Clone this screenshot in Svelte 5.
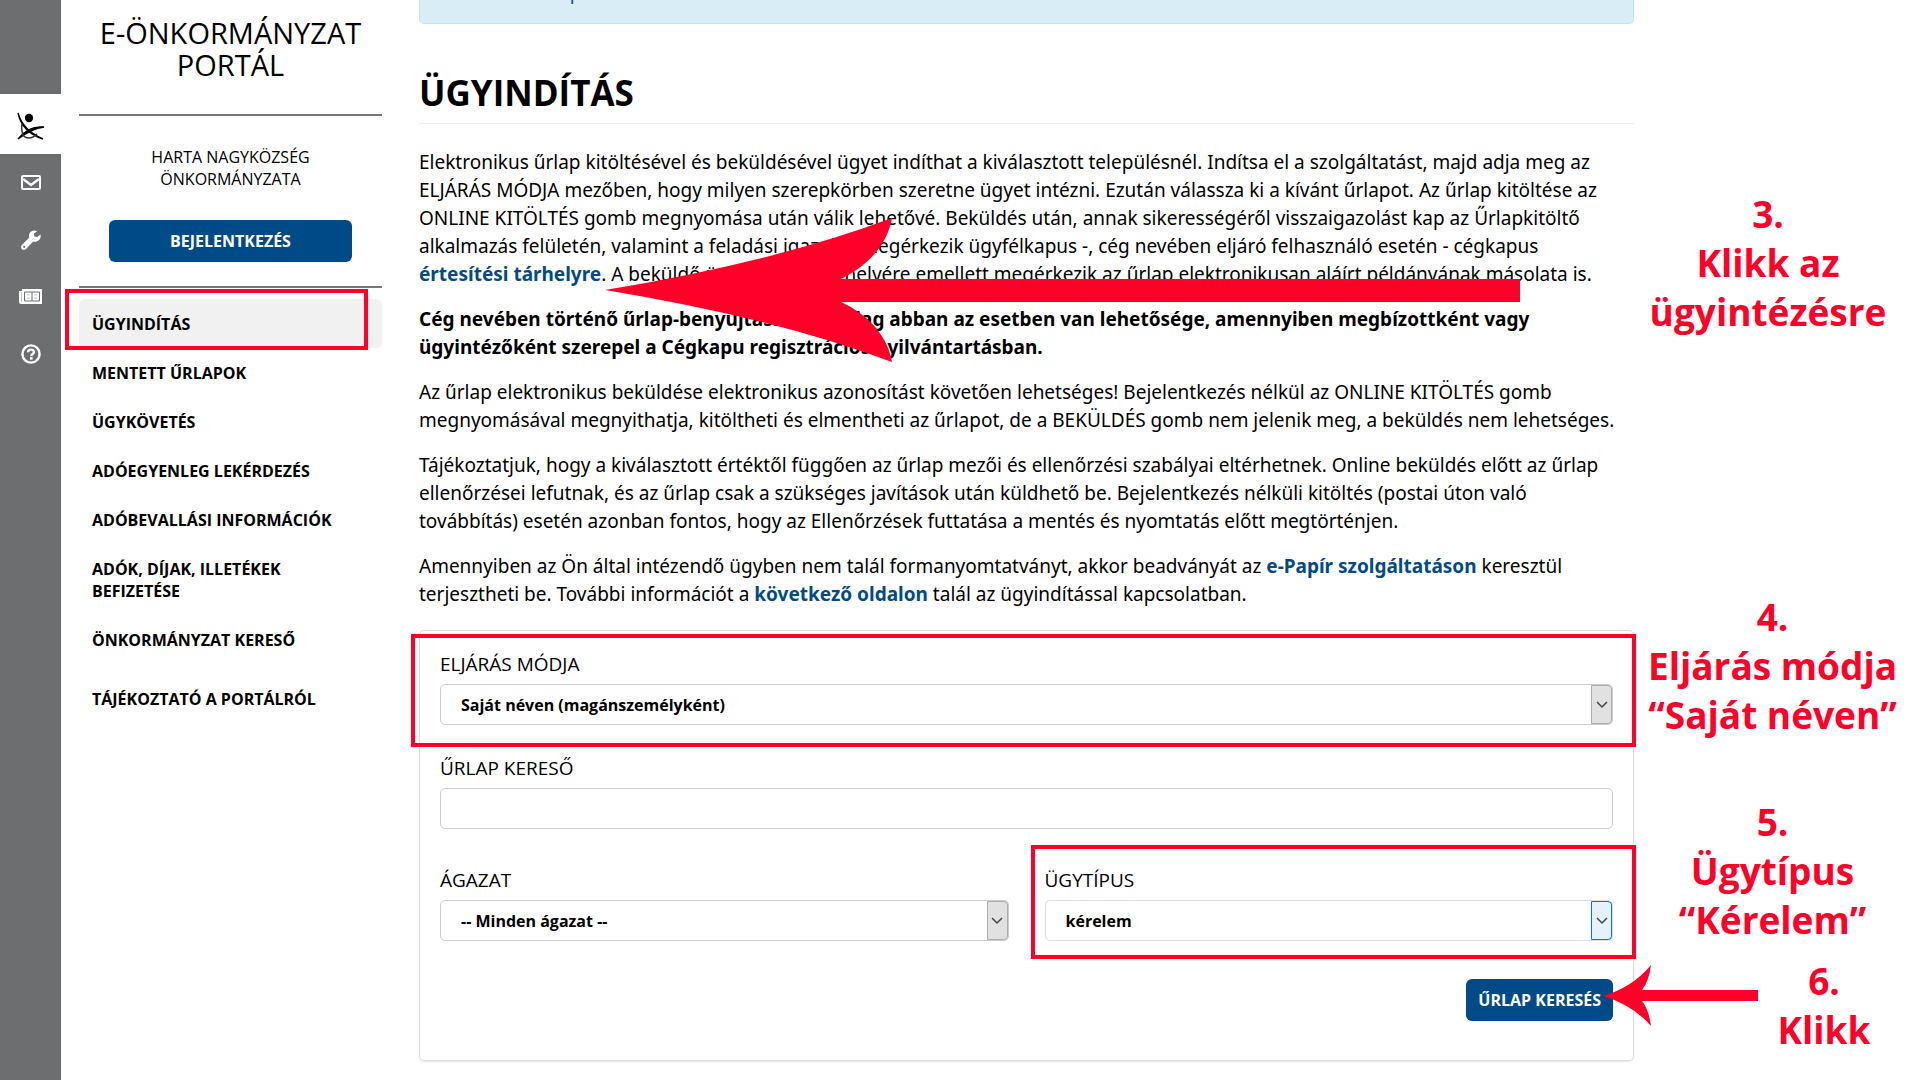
<script>
    const menu = [
        { label: 'ÜGYINDÍTÁS', active: true },
        { label: 'MENTETT ŰRLAPOK' },
        { label: 'ÜGYKÖVETÉS' },
        { label: 'ADÓEGYENLEG LEKÉRDEZÉS' },
        { label: 'ADÓBEVALLÁSI INFORMÁCIÓK' },
        { label: 'ADÓK, DÍJAK, ILLETÉKEK BEFIZETÉSE' },
        { label: 'ÖNKORMÁNYZAT KERESŐ' },
        { label: 'TÁJÉKOZTATÓ A PORTÁLRÓL', spaced: true }
    ];

    let search = $state('');
</script>

<div class="page">
    <nav class="rail" aria-label="Gyorsmenü">
        <a href="#home" class="logo" aria-label="Kezdőlap">
            <svg width="28" height="28" viewBox="0 0 28 28">
                <circle cx="12" cy="6" r="4.2" fill="#000" />
                <path d="M1 1C4 12 12 21 26 27C14 23 4 15 1 1Z" fill="#000" stroke="#000" stroke-width="1.4" />
                <path d="M1 27C8 18 16 14 27 15C18 16 10 20 1 27Z" fill="#000" stroke="#000" stroke-width="1.4" />
                <path d="M5 12C4 21 6 26 12 26C16 26 18 24 20 22" fill="none" stroke="#333" stroke-width="1.5" />
            </svg>
        </a>
        <a href="#mail" aria-label="Üzenetek">
            <svg width="20" height="15" viewBox="0 0 20 15">
                <rect x="1" y="1" width="18" height="13" rx="1" fill="none" stroke="#fff" stroke-width="2" />
                <path d="M2 4L10 10L18 4" fill="none" stroke="#fff" stroke-width="2.4" />
            </svg>
        </a>
        <a href="#tools" aria-label="Beállítások">
            <svg width="20" height="20" viewBox="0 0 20 20">
                <path d="M19.6 4.6L16.2 7L13.4 6.4L12.9 3.6L16.2 1.2C13.5 -.4 10 .6 8.6 3.2C7.8 4.7 7.8 6.2 8.3 7.6L.9 15C-.2 16.1 -.2 17.7 .8 18.9C2 20.1 3.8 20.2 5 19L12.2 11.6C16.5 12.8 20.4 9.2 19.6 4.6ZM3.2 17.9A1.1 1.1 0 1 1 3.2 15.7A1.1 1.1 0 0 1 3.2 17.9Z" fill="#fff" />
            </svg>
        </a>
        <a href="#news" aria-label="Hírek">
            <svg width="23" height="15" viewBox="0 0 23 15">
                <path d="M3 0H23V15H2Q0 15 0 13V2H3Z" fill="#fff" />
                <path d="M2.5 3V13" fill="none" stroke="#c9c9ca" stroke-width="1" />
                <path d="M5.5 3H20.5V12H5.5ZM13 3V12" fill="none" stroke="#6d6e70" stroke-width="1" />
                <path d="M8 6H11M15 6H18M8 9H11M15 9H18" stroke="#c9c9ca" stroke-width="1" />
            </svg>
        </a>
        <a href="#help" aria-label="Súgó">
            <svg width="20" height="20" viewBox="0 0 20 20">
                <circle cx="10" cy="10" r="8.6" fill="none" stroke="#fff" stroke-width="2.4" />
                <path d="M7 8.2C7.2 4.8 13 4.9 13 8C13 10 10.3 10 10.3 12.2" fill="none" stroke="#fff" stroke-width="2.4" />
                <rect x="9" y="13.2" width="2.6" height="2.4" fill="#fff" />
            </svg>
        </a>
    </nav>

    <aside class="sidebar">
        <h2>E-ÖNKORMÁNYZAT PORTÁL</h2>
        <div class="account">
            <p>HARTA NAGYKÖZSÉG ÖNKORMÁNYZATA</p>
            <button type="button" class="login">BEJELENTKEZÉS</button>
        </div>
        <ul>
            {#each menu as item}
                <li class:active={item.active} class:spaced={item.spaced}>
                    <a href="#menu">{item.label}</a>
                </li>
            {/each}
        </ul>
    </aside>

    <main>
        <div class="alert"><a href="#asp">ASP Központ</a></div>
        <h1>ÜGYINDÍTÁS</h1>

        <div class="intro">
            <p>
                Elektronikus űrlap kitöltésével és beküldésével ügyet indíthat a kiválasztott településnél. Indítsa el a szolgáltatást, majd adja meg az<br />
                ELJÁRÁS MÓDJA mezőben, hogy milyen szerepkörben szeretne ügyet intézni. Ezután válassza ki a kívánt űrlapot. Az űrlap kitöltése az<br />
                ONLINE KITÖLTÉS gomb megnyomása után válik lehetővé. Beküldés után, annak sikerességéről visszaigazolást kap az Űrlapkitöltő<br />
                alkalmazás felületén, valamint a feladási igazolás megérkezik ügyfélkapus -, cég nevében eljáró felhasználó esetén - cégkapus<br />
                <a href="#tarhely">értesítési tárhelyre</a>. A beküldő ügyfélkapus tárhelyére emellett megérkezik az űrlap elektronikusan aláírt példányának másolata is.
            </p>
            <p>
                <strong>Cég nevében történő űrlap-benyújtásra kizárólag abban az esetben van lehetősége, amennyiben megbízottként vagy<br />
                ügyintézőként szerepel a Cégkapu regisztrációs nyilvántartásban.</strong>
            </p>
            <p>
                Az űrlap elektronikus beküldése elektronikus azonosítást követően lehetséges! Bejelentkezés nélkül az ONLINE KITÖLTÉS gomb<br />
                megnyomásával megnyithatja, kitöltheti és elmentheti az űrlapot, de a BEKÜLDÉS gomb nem jelenik meg, a beküldés nem lehetséges.
            </p>
            <p>
                Tájékoztatjuk, hogy a kiválasztott értéktől függően az űrlap mezői és ellenőrzési szabályai eltérhetnek. Online beküldés előtt az űrlap<br />
                ellenőrzései lefutnak, és az űrlap csak a szükséges javítások után küldhető be. Bejelentkezés nélküli kitöltés (postai úton való<br />
                továbbítás) esetén azonban fontos, hogy az Ellenőrzések futtatása a mentés és nyomtatás előtt megtörténjen.
            </p>
            <p>
                Amennyiben az Ön által intézendő ügyben nem talál formanyomtatványt, akkor beadványát az <a href="#epapir">e-Papír szolgáltatáson</a> keresztül<br />
                terjesztheti be. További információt a <a href="#info">következő oldalon</a> talál az ügyindítással kapcsolatban.
            </p>
            <svg class="arrow big-arrow" width="915" height="144" viewBox="0 0 915 144">
                <path d="M0 72Q170 44 287 0C283 24 266 46 236 61H915V84H236C266 98 283 120 287 144Q170 100 0 72Z" fill="#ff0028" />
            </svg>
        </div>

        <form onsubmit={(e) => e.preventDefault()}>
            <div class="field marked">
                <label for="mode">ELJÁRÁS MÓDJA</label>
                <div class="select">
                    <select id="mode"><option>Saját néven (magánszemélyként)</option></select>
                    <span class="drop"><svg width="12" height="8" viewBox="0 0 12 8"><path d="M1 1L6 6L11 1" /></svg></span>
                </div>
            </div>
            <div class="field">
                <label for="search">ŰRLAP KERESŐ</label>
                <input id="search" type="text" bind:value={search} />
            </div>
            <div class="row">
                <div class="field">
                    <label for="sector">ÁGAZAT</label>
                    <div class="select">
                        <select id="sector"><option>-- Minden ágazat --</option></select>
                        <span class="drop"><svg width="12" height="8" viewBox="0 0 12 8"><path d="M1 1L6 6L11 1" /></svg></span>
                    </div>
                </div>
                <div class="field marked">
                    <label for="type">ÜGYTÍPUS</label>
                    <div class="select hot">
                        <select id="type"><option>kérelem</option></select>
                        <span class="drop"><svg width="12" height="8" viewBox="0 0 12 8"><path d="M1 1L6 6L11 1" /></svg></span>
                    </div>
                </div>
            </div>
            <div class="actions">
                <button type="submit">ŰRLAP KERESÉS</button>
                <svg class="arrow small-arrow" width="155" height="61" viewBox="0 0 155 61">
                    <path d="M0 31Q30 22 48 0Q46 16 39 25H155V36H39Q46 45 48 61Q30 40 0 31Z" fill="#ff0028" />
                </svg>
            </div>
        </form>
    </main>

    <aside class="steps">
        <p class="first">3.<br />Klikk az<br />ügyintézésre</p>
        <p>4.<br />Eljárás módja<br />“Saját néven”</p>
        <p>5.<br />Ügytípus<br />“Kérelem”</p>
        <p class="last">6.<br />Klikk</p>
    </aside>
</div>

<style>
    :global(body) { margin: 0; background: #fff; }

    .page {
        display: flex;
        min-height: 100vh;
        font-family: 'Open Sans', 'Noto Sans', sans-serif;
        font-size: 19px;
        line-height: 28px;
        color: #000;
    }
    a { color: #004a87; font-weight: bold; text-decoration: none; }
    p { margin: 0; }

    .rail { flex: 0 0 61px; background: #6d6e70; padding-top: 94px; box-sizing: border-box; }
    .rail a { display: flex; align-items: center; justify-content: center; height: 57px; }
    .rail .logo { height: 60px; padding-top: 4px; box-sizing: border-box; background: #fff; }

    .sidebar { flex: 0 0 303px; margin: 0 37px 0 18px; }
    h2 { margin: 0; padding: 17px 0 33px; border-bottom: 2px solid #777; font-size: 29px; line-height: 32px; font-weight: normal; text-align: center; }
    .account { padding: 30px 30px 24px; border-bottom: 2px solid #777; font-size: 16px; line-height: 22px; text-align: center; }
    .account p { padding: 0 30px 30px; }
    button { height: 42px; border: 0; border-radius: 6px; background: #004a87; color: #fff; font: bold 16px 'Open Sans', sans-serif; }
    .login { width: 100%; }

    ul { list-style: none; margin: 11px 0 0; padding: 0; }
    li { position: relative; border-radius: 6px; }
    li a { display: block; padding: 14px 40px 13px 13px; color: #000; font-size: 16px; line-height: 22px; }
    li.active { background: #f1f1f1; }
    li.spaced { margin-top: 10px; }
    li.active::after { content: ''; position: absolute; inset: -10px 14px -2px -14px; border: 4px solid #ff0028; }

    main { flex: 1; min-width: 0; }
    .alert { height: 24px; box-sizing: border-box; padding-left: 79px; overflow: hidden; border: 1px solid #bce8f1; border-top: 0; border-radius: 0 0 5px 5px; background: #d9edf7; }
    .alert a { display: block; margin-top: -21px; font-weight: normal; }
    h1 { margin: 44px 0 24px; padding-bottom: 5px; border-bottom: 1px solid #eee; font-size: 35px; line-height: 50px; }

    .intro { position: relative; margin-bottom: 22px; font-family: 'Noto Sans', 'Open Sans', sans-serif; }
    .intro p { white-space: nowrap; }
    .intro p + p { margin-top: 17px; }
    .arrow { position: absolute; }
    .big-arrow { left: 186px; top: 70px; }

    form { padding: 19px 20px 39px; border: 1px solid #ddd; border-radius: 5px; box-shadow: 0 1px 2px rgba(0, 0, 0, 0.1); }
    .field { position: relative; flex: 1; margin-bottom: 29px; }
    label { display: block; margin-bottom: 6px; }
    .select { position: relative; }
    select, input { display: block; width: 100%; height: 41px; box-sizing: border-box; padding: 0 20px; border: 1px solid #ccc; border-radius: 5px; background: #fff; color: #000; font: bold 16px 'Open Sans', sans-serif; }
    select { appearance: none; }
    .drop { position: absolute; top: 1px; right: 1px; bottom: 1px; width: 21px; box-sizing: border-box; display: flex; align-items: center; justify-content: center; border: 1px solid #adadad; border-radius: 0 4px 4px 0; background: #e1e1e1; pointer-events: none; }
    .drop path { fill: none; stroke: #444; stroke-width: 1.5; }
    .hot .drop { border-color: #0078d7; background: #e5f1fb; }
    .hot select { border-color: #ddd; }
    .row { display: flex; gap: 36px; margin-top: 37px; }
    .marked::after { content: ''; position: absolute; inset: -16px -23px -22px -29px; border: 4px solid #ff0028; pointer-events: none; }
    .row .marked::after { inset: -21px -23px -18px -14px; }
    .actions { position: relative; display: flex; justify-content: flex-end; margin-top: 9px; }
    .actions button { padding: 0 12px; }
    .small-arrow { left: calc(100% - 10px); top: -14px; }

    .steps { flex: 0 0 286px; padding: 189px 18px 0 0; box-sizing: border-box; color: #ff0028; font-size: 37px; line-height: 49px; font-weight: bold; text-align: center; }
    .steps p { margin-bottom: 58px; padding-left: 9px; white-space: nowrap; }
    .steps .first { margin-bottom: 256px; padding-left: 0; }
    .steps .last { margin: -46px 0 0; padding-left: 112px; }
</style>
